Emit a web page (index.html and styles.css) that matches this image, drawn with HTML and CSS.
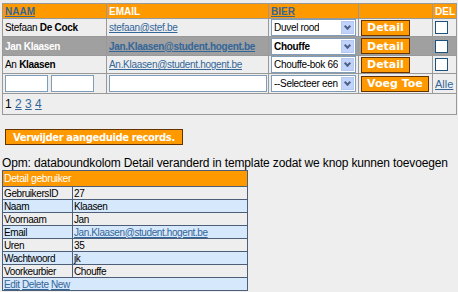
FILE: index.html
```html
<!DOCTYPE html>
<html>
<head>
  <title>Gebruikers</title>
  <link rel="stylesheet" href="styles.css">
</head>
<body>
  <table class="grid">
    <tr class="grid-head">
      <th class="col-naam"><a href="#">NAAM</a></th>
      <th class="col-email">EMAIL</th>
      <th class="col-bier"><a href="#">BIER</a></th>
      <th class="col-detail"></th>
      <th class="col-del">DEL</th>
    </tr>
    <tr>
      <td>Stefaan <b>De Cock</b></td>
      <td><a href="#">stefaan@stef.be</a></td>
      <td><div class="select"><span>Duvel rood</span><i class="arrow"></i></div></td>
      <td><button class="btn">Detail</button></td>
      <td class="center"><span class="check"></span></td>
    </tr>
    <tr class="selected">
      <td>Jan Klaasen</td>
      <td><a href="#">Jan.Klaasen@student.hogent.be</a></td>
      <td><div class="select bold"><span>Chouffe</span><i class="arrow"></i></div></td>
      <td><button class="btn">Detail</button></td>
      <td class="center"><span class="check"></span></td>
    </tr>
    <tr>
      <td>An <b>Klaasen</b></td>
      <td><a href="#">An.Klaasen@student.hogent.be</a></td>
      <td><div class="select"><span>Chouffe-bok 66</span><i class="arrow"></i></div></td>
      <td><button class="btn">Detail</button></td>
      <td class="center"><span class="check"></span></td>
    </tr>
    <tr class="insert">
      <td><span class="textbox small"></span><span class="textbox small"></span></td>
      <td><span class="textbox wide"></span></td>
      <td><div class="select"><span>--Selecteer een</span><i class="arrow"></i></div></td>
      <td><button class="btn">Voeg Toe</button></td>
      <td><a class="all" href="#">Alle</a></td>
    </tr>
    <tr class="pager">
      <td colspan="5">1 <a href="#">2</a> <a href="#">3</a> <a href="#">4</a></td>
    </tr>
  </table>

  <button class="btn delete">Verwijder aangeduide records.</button>

  <p class="note">Opm: databoundkolom Detail veranderd in template zodat we knop kunnen toevoegen</p>

  <table class="details">
    <tr class="details-head"><td colspan="2">Detail gebruiker</td></tr>
    <tr><td class="label">GebruikersID</td><td>27</td></tr>
    <tr class="alt"><td class="label">Naam</td><td>Klaasen</td></tr>
    <tr><td class="label">Voornaam</td><td>Jan</td></tr>
    <tr class="alt"><td class="label">Email</td><td><a href="#">Jan.Klaasen@student.hogent.be</a></td></tr>
    <tr><td class="label">Uren</td><td>35</td></tr>
    <tr class="alt"><td class="label">Wachtwoord</td><td>jk</td></tr>
    <tr><td class="label">Voorkeurbier</td><td>Chouffe</td></tr>
    <tr class="details-foot"><td colspan="2"><a href="#">Edit</a> <a href="#">Delete</a> <a href="#">New</a></td></tr>
  </table>
</body>
</html>
```

FILE: styles.css
```css
body {
  margin: 0;
  padding: 3px 2px;
  background-color: #eeeeee;
  font-family: "Liberation Sans", Arial, sans-serif;
  font-size: 10px;
  color: #000;
}
a {
  color: #336699;
}
.grid {
  width: 454px;
  table-layout: fixed;
  border-collapse: collapse;
  border: 1px solid #999;
  letter-spacing: -0.3px;
}
.grid td, .grid th {
  box-sizing: border-box;
  border: 1px solid #999;
  padding: 0 2px;
  height: 18px;
  text-align: left;
  white-space: nowrap;
  overflow: hidden;
}
.grid-head th {
  background-color: #ff9900;
  color: #fff;
  font-weight: bold;
  height: 15px;
  line-height: 13px;
  letter-spacing: 0;
}
.grid-head a {
  color: #336699;
}
.col-naam { width: 104px; }
.col-email { width: 162px; }
.col-bier { width: 90px; }
.col-detail { width: 74px; }
.col-del { width: 24px; }
.selected td {
  background-color: #a0a0a0;
  color: #fff;
  font-weight: bold;
  height: 19px;
}
.selected a {
  color: #336699;
}
.center {
  text-align: center;
}
.select {
  display: flex;
  align-items: center;
  justify-content: space-between;
  height: 15px;
  background: #fff;
  border: 1px solid #7f9db9;
  color: #000;
  font-weight: normal;
  padding-left: 2px;
}
.select span {
  overflow: hidden;
}
.select.bold {
  font-weight: bold;
}
.arrow {
  flex-shrink: 0;
  width: 13px;
  height: 13px;
  margin-right: 1px;
  background: #c1d3fb;
  border: 1px solid #b4c8f0;
  box-sizing: border-box;
  position: relative;
}
.arrow::after {
  content: "";
  position: absolute;
  left: 3px;
  top: 2px;
  width: 3px;
  height: 3px;
  border-right: 2px solid #4d6185;
  border-bottom: 2px solid #4d6185;
  transform: rotate(45deg);
}
.btn {
  background-color: #ff9900;
  color: #fff;
  border: 1px solid #663300;
  font-family: "DejaVu Sans", Verdana, sans-serif;
  font-size: 11px;
  font-weight: bold;
  letter-spacing: 0;
  padding: 0 5px;
  height: 16px;
  line-height: 13px;
  white-space: nowrap;
}
.check {
  display: inline-block;
  width: 11px;
  height: 11px;
  background: #fff;
  border: 1px solid #1c5180;
  vertical-align: middle;
}
.textbox {
  display: inline-block;
  height: 15px;
  background: #fff;
  border: 1px solid #7f9db9;
  vertical-align: middle;
}
.textbox.small {
  width: 41px;
  margin-right: 3px;
}
.textbox.wide {
  width: 156px;
}
.insert td {
  height: 20px;
}
.all {
  font-size: 11px;
  letter-spacing: 0;
}
.pager td {
  height: 21px;
  font-size: 12px;
  letter-spacing: 0;
}
.delete {
  display: block;
  margin: 14px 0 0 3px;
  padding: 0 7px;
  font-size: 10px;
  letter-spacing: -0.4px;
}
.note {
  margin: 11px 0 0;
  font-size: 12px;
  line-height: 14px;
  letter-spacing: -0.15px;
  white-space: nowrap;
}
.details {
  width: 246px;
  border-collapse: collapse;
  border: 1px solid #4c5e78;
  letter-spacing: -0.4px;
}
.details td {
  border: 1px solid #4c5e78;
  height: 12px;
  line-height: 11px;
  padding: 0 1px;
  background-color: #eeeeee;
  white-space: nowrap;
}
.details .alt td {
  background-color: #d6e8fb;
}
.details .label {
  width: 67px;
}
.details-head td {
  background-color: #ff9900 !important;
  color: #fff;
  font-size: 10.5px;
  height: 15px;
}
.details-foot td {
  background-color: #d6e8fb !important;
}
```
